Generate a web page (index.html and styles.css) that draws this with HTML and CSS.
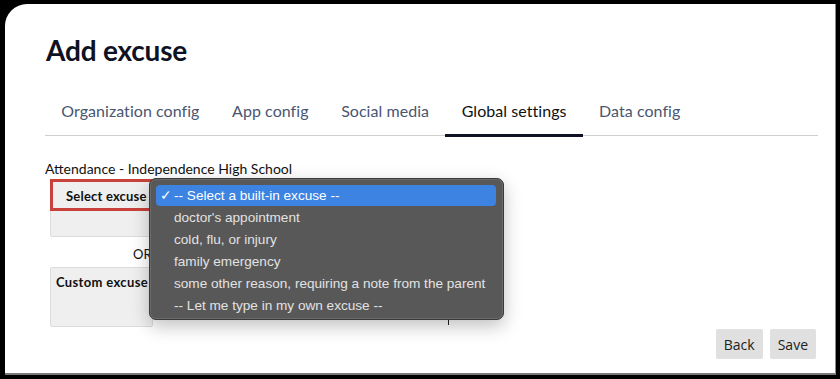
FILE: index.html
```html
<!DOCTYPE html>
<html>
<head>
<meta charset="utf-8">
<link rel="stylesheet" href="styles.css">
</head>
<body>
<div class="panel">
  <h1 class="title">Add excuse</h1>
  <nav class="tabs">
    <span class="tab">Organization config</span>
    <span class="tab">App config</span>
    <span class="tab">Social media</span>
    <span class="tab active">Global settings</span>
    <span class="tab">Data config</span>
  </nav>
  <div class="section">
    <div class="caption">Attendance - Independence High School</div>
    <div class="form">
      <div class="field field-select">
        <div class="field-label highlighted">Select excuse</div>
      </div>
      <div class="or">OR</div>
      <div class="field field-custom">
        <div class="field-label plain">Custom excuse</div>
      </div>
      <span class="mark"></span>
      <ul class="menu">
        <li class="menu-item selected"><span class="check">✓</span>-- Select a built-in excuse --</li>
        <li class="menu-item">doctor's appointment</li>
        <li class="menu-item">cold, flu, or injury</li>
        <li class="menu-item">family emergency</li>
        <li class="menu-item">some other reason, requiring a note from the parent</li>
        <li class="menu-item">-- Let me type in my own excuse --</li>
      </ul>
    </div>
  </div>
  <div class="actions">
    <button class="btn">Back</button>
    <button class="btn">Save</button>
  </div>
</div>
</body>
</html>
```

FILE: styles.css
```css
html, body {
  margin: 0;
  padding: 0;
  background: #000;
  width: 840px;
  height: 379px;
  overflow: hidden;
}

.panel {
  box-sizing: border-box;
  margin: 4px 0 0 5px;
  width: 831px;
  height: 371px;
  background: #fff;
  border-top-left-radius: 22px;
  border-right: 1px solid #8a8a8a;
  border-bottom: 2px solid #7a7a7a;
  padding: 1px 17px 0 40px;
  font-family: "Lato", "Noto Sans", sans-serif;
  color: #111;
}

.title {
  margin: 28px 0 0 1px;
  font-size: 28px;
  line-height: 34px;
  font-weight: 700;
  color: #0f1222;
  letter-spacing: -0.2px;
}

.tabs {
  display: flex;
  margin-top: 22px;
  border-bottom: 1px solid #cfcfcf;
}

.tab {
  padding: 12px 16.3px 14px;
  font-size: 16px;
  line-height: 20px;
  letter-spacing: 0.05px;
  color: #4a5670;
}

.tab.active {
  color: #111;
  border-bottom: 3px solid #0f1222;
  margin-bottom: -2px;
  padding-bottom: 13px;
}

.section {
  padding-top: 24px;
}

.caption {
  font-size: 14px;
  line-height: 17px;
  color: #111;
}

.form {
  position: relative;
  padding: 2px 0 0 5px;
  height: 153px;
}

.field {
  box-sizing: border-box;
  width: 103px;
  background: #efefef;
  border: 1px solid #dcdcdc;
  border-radius: 2px;
}

.field-select {
  height: 58px;
}

.field-custom {
  height: 60px;
}

.field-label {
  font-size: 13px;
  font-weight: 700;
  color: #111;
  white-space: nowrap;
}

.field-label.highlighted {
  box-sizing: border-box;
  height: 32px;
  margin: -1px;
  width: 103px;
  border: 3px solid #c8413a;
  padding: 6px 0 0 13px;
  line-height: 17px;
  letter-spacing: 0.2px;
}

.field-label.plain {
  padding: 6px 0 0 5px;
  line-height: 16px;
  letter-spacing: 0.35px;
}

.or {
  font-size: 13px;
  line-height: 16px;
  padding: 9px 0 5px 83px;
  color: #111;
}

.mark {
  position: absolute;
  left: 403px;
  top: 143px;
  width: 1px;
  height: 5px;
  background: #222;
}

.menu {
  position: absolute;
  left: 104px;
  top: 1px;
  box-sizing: border-box;
  width: 355px;
  height: 142px;
  margin: 0;
  padding: 6px 7px 4px 6px;
  list-style: none;
  background: #585858;
  border: 1px solid #3a3a3a;
  border-radius: 7px;
  box-shadow: 0 6px 18px rgba(0, 0, 0, 0.25), inset 0 0 0 1px #6a6a6a;
  font-family: "Liberation Sans", Arial, sans-serif;
  font-size: 13.6px;
}

.menu-item {
  position: relative;
  height: 22px;
  line-height: 22px;
  padding-left: 18px;
  color: #e2e2e2;
  border-radius: 4px;
  white-space: nowrap;
}

.menu-item.selected {
  height: 21px;
  line-height: 21px;
  margin-bottom: 1px;
  background: #3c83e2;
  color: #fff;
}

.check {
  position: absolute;
  left: 4px;
  top: 0;
}

.actions {
  display: flex;
  justify-content: flex-end;
  gap: 7px;
  margin-top: -3px;
  padding-right: 2px;
}

.btn {
  height: 30px;
  padding: 0 8px;
  border: none;
  border-radius: 2px;
  background: #e0e0e0;
  font-family: "Open Sans", "Noto Sans", sans-serif;
  font-size: 14px;
  color: #222;
}
```
